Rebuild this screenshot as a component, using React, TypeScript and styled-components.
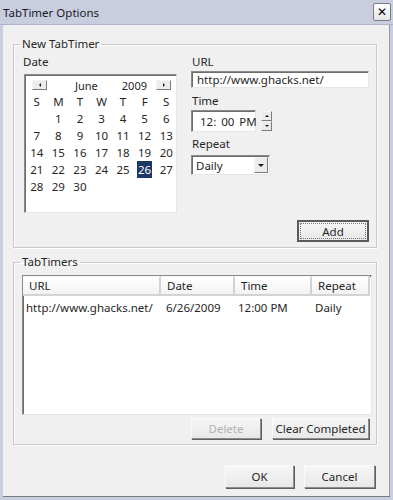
import React, { useState } from 'react';
import styled, { createGlobalStyle, css } from 'styled-components';

const GlobalStyle = createGlobalStyle`
  html, body {
    margin: 0;
    padding: 0;
    background: #f0f0f0;
  }
  body {
    font-family: 'Noto Sans', 'Open Sans', sans-serif;
    font-size: 11px;
    color: #262626;
  }
  * {
    box-sizing: border-box;
  }
`;

const sunken = css`
  border-style: solid;
  border-width: 1px;
  border-color: #8a8a8a #e6e6e6 #e6e6e6 #8a8a8a;
  box-shadow: inset 1px 1px 0 #6d6d6d;
`;

const Window = styled.div`
  width: 393px;
  height: 500px;
  display: flex;
  flex-direction: column;
  background: #f0f0f0;
  border-style: solid;
  border-color: #c8cee0;
  border-width: 0 3px 3px 3px;
  box-shadow: inset 0 -1px 0 #7a7a7a, inset -1px 0 0 #9a9a9a;
`;

const TitleBar = styled.div`
  height: 25px;
  flex: none;
  display: flex;
  align-items: center;
  justify-content: space-between;
  padding: 0 2px 0 3px;
  margin: 0 -3px;
  background: #c8cee0;
  border-bottom: 1px solid #aeb5c9;
`;

const Title = styled.span`
  font-size: 11.5px;
  color: #1a1a1a;
`;

const CloseButton = styled.button`
  width: 18px;
  height: 18px;
  padding: 0;
  display: flex;
  align-items: center;
  justify-content: center;
  border: 1px solid #7c7c7c;
  border-radius: 2px;
  background: linear-gradient(#ffffff, #e4e4e4);
  font-family: 'DejaVu Sans', sans-serif;
  font-size: 12px;
  font-weight: bold;
  color: #000;
`;

const Body = styled.div`
  flex: 1;
  display: flex;
  flex-direction: column;
  padding: 11px 13px 0 10px;
`;

const GroupBox = styled.fieldset<{ $gapTop?: number }>`
  margin: ${({ $gapTop }) => $gapTop ?? 0}px 0 0 0;
  padding: 2px 6px 5px 8px;
  border: 1px solid #c9c9c9;
  box-shadow: 1px 1px 0 #ffffff, inset 1px 1px 0 #ffffff;
  min-width: 0;
`;

const Legend = styled.legend`
  padding: 0 2px;
  margin-left: -2px;
  font-size: 11.5px;
  line-height: 16px;
`;

const NewRow = styled.div`
  display: flex;
  gap: 13px;
`;

const Column = styled.div<{ $width?: number }>`
  display: flex;
  flex-direction: column;
  align-items: flex-start;
  width: ${({ $width }) => ($width ? `${$width}px` : 'auto')};
  flex: ${({ $width }) => ($width ? 'none' : 1)};
`;

const FieldLabel = styled.label<{ $gap?: number }>`
  display: block;
  font-size: 11.5px;
  line-height: 15px;
  margin-top: ${({ $gap }) => $gap ?? 0}px;
  margin-left: 1px;
`;

const Calendar = styled.div`
  ${sunken};
  margin: 5px 0 0 2px;
  width: 153px;
  height: 139px;
  background: #ffffff;
  padding: 2px 0 0 1px;
`;

const CalNav = styled.div`
  height: 16px;
  display: flex;
  align-items: center;
  padding: 0 5px 0 6px;
  font-size: 11px;
`;

const NavButton = styled.button`
  width: 15px;
  height: 10px;
  padding: 0;
  display: flex;
  align-items: center;
  justify-content: center;
  border: 1px solid;
  border-color: #f4f4f4 #7a7a7a #7a7a7a #f4f4f4;
  background: #ececec;
  line-height: 1;
`;

const MonthLabel = styled.span`
  margin-left: 28px;
`;

const YearLabel = styled.span`
  margin-left: 24px;
  margin-right: auto;
`;

const DayGrid = styled.div`
  display: grid;
  grid-template-columns: repeat(7, 1fr);
  grid-auto-rows: 17px;
  width: 151px;
`;

const DayCell = styled.div`
  display: flex;
  align-items: center;
  justify-content: center;
  font-size: 11.5px;
`;

const Selected = styled.span`
  background: #1d3866;
  color: #ffffff;
  padding: 0 1px;
  line-height: 17px;
`;

const TextInput = styled.div<{ $width: number; $height: number }>`
  ${sunken};
  width: ${({ $width }) => $width}px;
  height: ${({ $height }) => $height}px;
  margin-top: 2px;
  background: #ffffff;
  display: flex;
  align-items: center;
  padding-left: 5px;
  font-size: 11.5px;
  white-space: nowrap;
`;

const TimeRow = styled.div`
  display: flex;
  align-items: center;
  gap: 5px;
  margin-top: 2px;
`;

const TimeBox = styled(TextInput)`
  margin-top: 0;
  padding-left: 8px;
  word-spacing: 2px;
`;

const Spinner = styled.div`
  display: flex;
  flex-direction: column;
  width: 11px;
  height: 20px;
`;

const SpinButton = styled.div`
  flex: 1;
  display: flex;
  align-items: center;
  justify-content: center;
  border: 1px solid;
  border-color: #f4f4f4 #7a7a7a #7a7a7a #f4f4f4;
  background: #ececec;
`;

const Select = styled.div`
  ${sunken};
  width: 79px;
  height: 20px;
  margin-top: 4px;
  background: #ffffff;
  display: flex;
  align-items: center;
  justify-content: space-between;
  padding: 1px 1px 1px 4px;
  font-size: 11.5px;
`;

const DropButton = styled.div`
  width: 14px;
  height: 100%;
  display: flex;
  align-items: center;
  justify-content: center;
  border: 1px solid;
  border-color: #f4f4f4 #7a7a7a #7a7a7a #f4f4f4;
  background: #ececec;
`;

const Button = styled.button<{ $width: number; $height?: number; $default?: boolean }>`
  width: ${({ $width }) => $width}px;
  height: ${({ $height }) => $height ?? 21}px;
  padding: 0;
  border: 1px solid;
  border-color: #fafafa #8d8d8d #8d8d8d #fafafa;
  box-shadow: 1px 1px 0 #5f5f5f;
  background: linear-gradient(#f6f6f6, #e8e8e8);
  font-family: inherit;
  font-size: 11.5px;
  color: #262626;
  &:disabled {
    color: #b3b3b3;
  }
  ${({ $default }) =>
    $default &&
    css`
      border: 2px solid #5a5a5a;
      box-shadow: none;
      outline: 1px dotted #777;
      outline-offset: -4px;
    `}
`;

const AddRow = styled.div`
  display: flex;
  justify-content: flex-end;
  margin-top: 7px;
  padding-right: 1px;
`;

const ListView = styled.div`
  ${sunken};
  margin-top: 3px;
  height: 140px;
  background: #ffffff;
  width: 350px;
`;

const ListTable = styled.div`
  display: grid;
  grid-template-columns: 138px 74px 77px 58px;
`;

const HeaderCell = styled.div`
  height: 20px;
  display: flex;
  align-items: center;
  padding-left: 6px;
  font-size: 11.5px;
  background: linear-gradient(#ffffff, #f3f3f3);
  border-right: 2px solid #d3d3d3;
  border-bottom: 2px solid #d3d3d3;
  border-top: 1px solid #f7f7f7;
`;

const RowCell = styled.div<{ $indent: number }>`
  padding-left: ${({ $indent }) => $indent}px;
  margin-top: 3px;
  line-height: 17px;
  font-size: 11.5px;
  white-space: nowrap;
`;

const ListButtons = styled.div`
  display: flex;
  justify-content: flex-end;
  gap: 11px;
  margin-top: 3px;
  padding-right: 1px;
`;

const Footer = styled.div`
  display: flex;
  justify-content: flex-end;
  gap: 10px;
  margin-top: 20px;
  padding-right: 2px;
`;

const Triangle = ({ dir, size = 3 }: { dir: 'left' | 'right' | 'up' | 'down'; size?: number }) => {
  const pts = {
    left: `${size},0 0,${size} ${size},${size * 2}`,
    right: `0,0 ${size},${size} 0,${size * 2}`,
    up: `0,${size} ${size},0 ${size * 2},${size}`,
    down: `0,0 ${size * 2},0 ${size},${size}`,
  }[dir];
  const w = dir === 'up' || dir === 'down' ? size * 2 : size;
  const h = dir === 'up' || dir === 'down' ? size : size * 2;
  return (
    <svg width={w} height={h} viewBox={`0 0 ${w} ${h}`}>
      <polygon points={pts} fill="#1b1b1b" />
    </svg>
  );
};

const dayNames = ['S', 'M', 'T', 'W', 'T', 'F', 'S'];
const days: (number | null)[] = [null, ...Array.from({ length: 30 }, (_, i) => i + 1)];

const timers = [{ url: 'http://www.ghacks.net/', date: '6/26/2009', time: '12:00 PM', repeat: 'Daily' }];

export default function App() {
  const [selected] = useState(26);

  return (
    <Window>
      <GlobalStyle />
      <TitleBar>
        <Title>TabTimer Options</Title>
        <CloseButton>✕</CloseButton>
      </TitleBar>
      <Body>
        <GroupBox>
          <Legend>New TabTimer</Legend>
          <NewRow>
            <Column $width={156}>
              <FieldLabel>Date</FieldLabel>
              <Calendar>
                <CalNav>
                  <NavButton>
                    <Triangle dir="left" size={2} />
                  </NavButton>
                  <MonthLabel>June</MonthLabel>
                  <YearLabel>2009</YearLabel>
                  <NavButton>
                    <Triangle dir="right" size={2} />
                  </NavButton>
                </CalNav>
                <DayGrid>
                  {dayNames.map((d, i) => (
                    <DayCell key={`n${i}`}>{d}</DayCell>
                  ))}
                  {days.map((d, i) => (
                    <DayCell key={i}>{d === selected ? <Selected>{d}</Selected> : d}</DayCell>
                  ))}
                </DayGrid>
              </Calendar>
            </Column>
            <Column>
              <FieldLabel>URL</FieldLabel>
              <TextInput $width={178} $height={17}>http://www.ghacks.net/</TextInput>
              <FieldLabel $gap={5}>Time</FieldLabel>
              <TimeRow>
                <TimeBox $width={65} $height={22}>12: 00 PM</TimeBox>
                <Spinner>
                  <SpinButton>
                    <Triangle dir="up" size={2} />
                  </SpinButton>
                  <SpinButton>
                    <Triangle dir="down" size={2} />
                  </SpinButton>
                </Spinner>
              </TimeRow>
              <FieldLabel $gap={4}>Repeat</FieldLabel>
              <Select>
                Daily
                <DropButton>
                  <Triangle dir="down" size={3} />
                </DropButton>
              </Select>
            </Column>
          </NewRow>
          <AddRow>
            <Button $width={72} $height={22} $default>
              Add
            </Button>
          </AddRow>
        </GroupBox>
        <GroupBox $gapTop={6}>
          <Legend>TabTimers</Legend>
          <ListView>
            <ListTable>
              <HeaderCell>URL</HeaderCell>
              <HeaderCell>Date</HeaderCell>
              <HeaderCell>Time</HeaderCell>
              <HeaderCell>Repeat</HeaderCell>
              {timers.map((t) => (
                <React.Fragment key={t.url}>
                  <RowCell $indent={3}>{t.url}</RowCell>
                  <RowCell $indent={5}>{t.date}</RowCell>
                  <RowCell $indent={3}>{t.time}</RowCell>
                  <RowCell $indent={3}>{t.repeat}</RowCell>
                </React.Fragment>
              ))}
            </ListTable>
          </ListView>
          <ListButtons>
            <Button $width={70} disabled>
              Delete
            </Button>
            <Button $width={97}>Clear Completed</Button>
          </ListButtons>
        </GroupBox>
        <Footer>
          <Button $width={69} $height={23}>
            OK
          </Button>
          <Button $width={71} $height={23}>
            Cancel
          </Button>
        </Footer>
      </Body>
    </Window>
  );
}
